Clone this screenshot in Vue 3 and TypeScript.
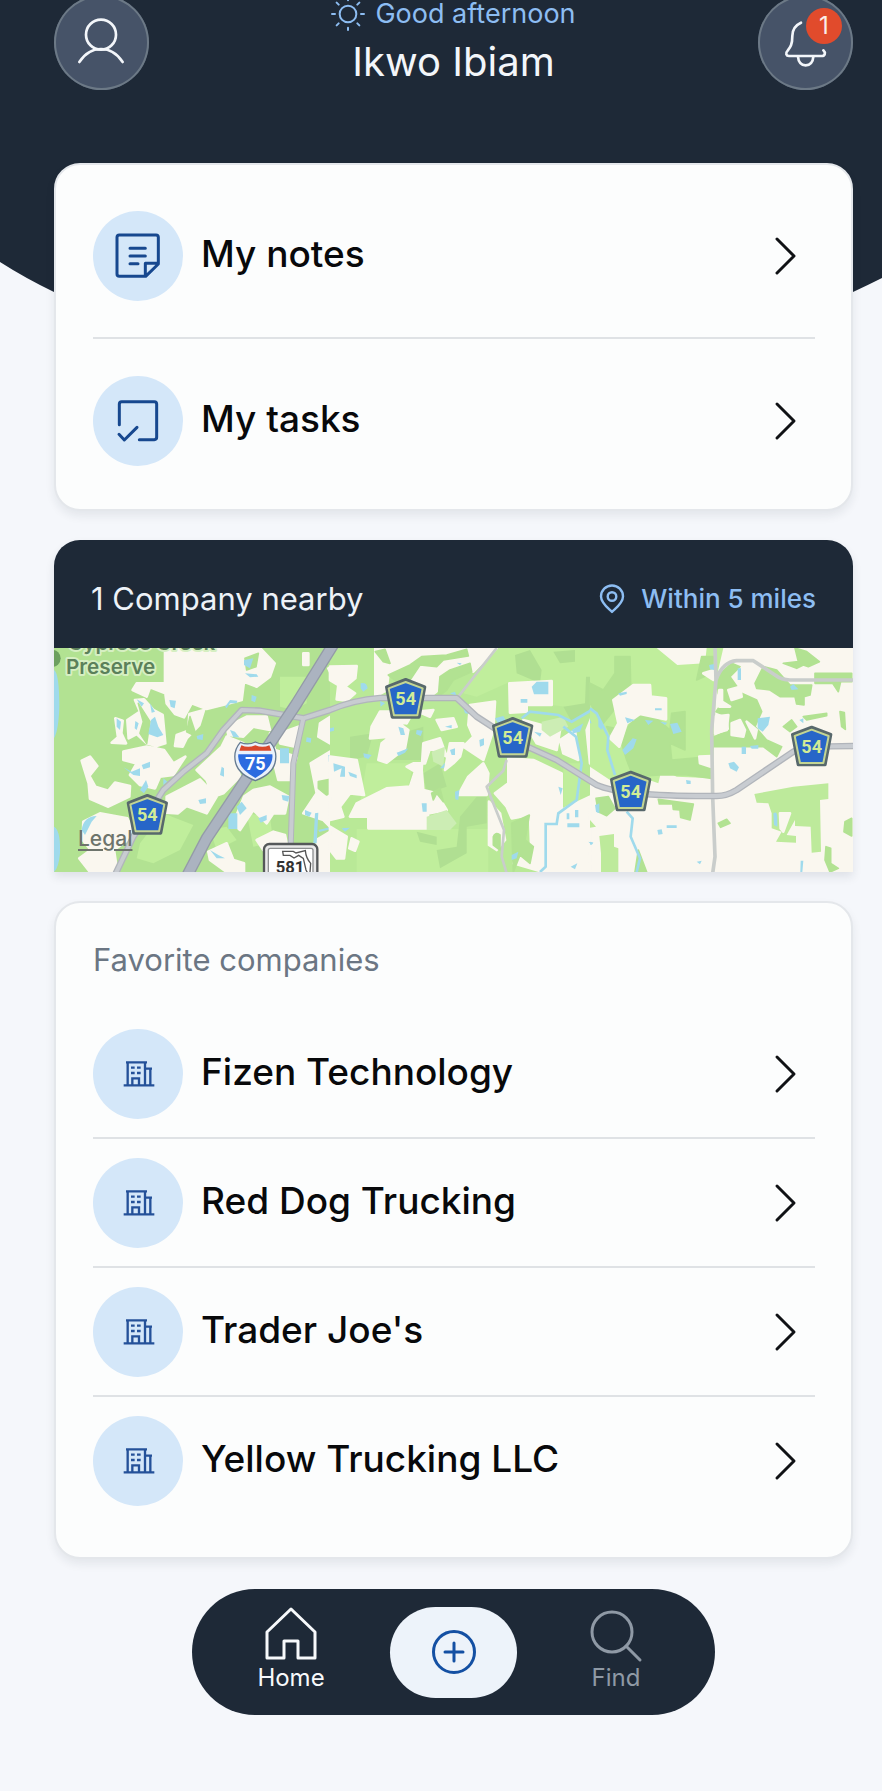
<script setup lang="ts">
interface Shield { id: string; x: number; y: number }
interface Company { id: number; name: string }

const greeting = 'Good afternoon'
const userName = 'Ikwo Ibiam'
const unread = 1

const companies: Company[] = [
  { id: 1, name: 'Fizen Technology' },
  { id: 2, name: 'Red Dog Trucking' },
  { id: 3, name: "Trader Joe's" },
  { id: 4, name: 'Yellow Trucking LLC' },
]

const shields: Shield[] = [
  { id: 'a', x: 322, y: 855 },
  { id: 'b', x: 1097, y: 507 },
  { id: 'c', x: 1418, y: 624 },
  { id: 'd', x: 1772, y: 785 },
  { id: 'e', x: 2315, y: 650 },
]
</script>

<template>
  <div class="page">
    <svg class="backdrop" viewBox="0 0 882 420" preserveAspectRatio="none" aria-hidden="true">
      <path d="M0 0H882V278Q868 285 853 292Q660 385 453 385Q246 385 54 292Q25 278 0 262Z" fill="#1e2937" />
    </svg>

    <header class="top">
      <button class="round" type="button" aria-label="Profile">
        <svg viewBox="163 -15 285 285" fill="none" stroke="#f3f6fa" stroke-width="8" stroke-linecap="round">
          <circle cx="304" cy="104" r="45" />
          <path d="M239 186C256 160 280 147 304 147S352 160 369 186" />
        </svg>
      </button>
      <div class="hello">
        <p class="greeting">
          <svg viewBox="994 -8 102 102" fill="none" stroke="#8dbdf2" stroke-width="6" stroke-linecap="round" aria-hidden="true">
            <circle cx="1045" cy="43" r="25" />
            <path d="M1045 -5V2M1045 84V91M997 43H1006M1084 43H1093M1011 9L1017 15M1073 71L1079 77M1079 9L1073 15M1017 71L1011 77" />
          </svg>
          <span>{{ greeting }}</span>
        </p>
        <h1 class="name">{{ userName }}</h1>
      </div>
      <button class="round" type="button" aria-label="Notifications">
        <svg viewBox="951 -15 285 285" fill="none" stroke="#f3f6fa" stroke-width="8" stroke-linecap="round" stroke-linejoin="round">
          <path d="M1080 68C1062 76 1054 90 1054 108C1054 134 1048 142 1040 152C1032 160 1036 168 1044 168H1142C1152 168 1155 158 1147 151" />
          <path d="M1071 170C1072 186 1081 196 1094 196S1116 186 1117 170" />
        </svg>
        <span class="badge">{{ unread }}</span>
      </button>
    </header>

    <main class="stack">
      <nav class="card shortcuts" aria-label="Shortcuts">
        <a class="row tall" href="#notes">
          <span class="disc">
            <svg viewBox="279 632 270 270" fill="none" stroke="#17488f" stroke-width="9" stroke-linecap="round" stroke-linejoin="round" aria-hidden="true">
              <path d="M358 704H468Q475 704 475 711V791L437 828H358Q351 828 351 821V711Q351 704 358 704ZM475 789H436V828M390 744H436M390 767H436M390 790H414" />
            </svg>
          </span>
          <span class="label">My notes</span>
          <svg class="chevron" viewBox="0 0 24 40" aria-hidden="true"><path d="M3 3L20 20L3 37" /></svg>
        </a>
        <a class="row tall" href="#tasks">
          <span class="disc">
            <svg viewBox="158 136 270 270" fill="none" stroke="#17488f" stroke-width="9" stroke-linecap="round" stroke-linejoin="round" aria-hidden="true">
              <path d="M237 282V220Q237 213 244 213H342Q349 213 349 220V320Q349 327 342 327H297M236 311L252 328L290 290" />
            </svg>
          </span>
          <span class="label">My tasks</span>
          <svg class="chevron" viewBox="0 0 24 40" aria-hidden="true"><path d="M3 3L20 20L3 37" /></svg>
        </a>
      </nav>

      <section class="nearby">
        <div class="nearby-head">
          <h2 class="nearby-title">1 Company nearby</h2>
          <button class="range" type="button">
            <svg viewBox="0 0 26 30" fill="none" stroke="#8dbdf2" stroke-width="2.4" aria-hidden="true">
              <path d="M13 28C9 24 2 19 2 12.500A11 11 0 0 1 24 12.500C24 19 17 24 13 28Z" stroke-linejoin="round" />
              <circle cx="13" cy="12.500" r="4.300" />
            </svg>
            <span>Within 5 miles</span>
          </button>
        </div>
        <div class="map">
          <svg class="map-art" viewBox="42 354 2397 672" preserveAspectRatio="xMidYMid slice" role="img" aria-label="Map of nearby companies">
            <rect x="42" y="354" width="2397" height="672" fill="#faf7ef" />
            <!-- west -->
            <path fill="#b2e292" d="M42 354H912V1026H42Z" />
            <path fill="#c0ee9c" d="M720 440H800V520L760 540L720 530ZM300 940L370 850L400 862L460 885L420 960L340 1000L290 985ZM570 430L610 440L600 480L565 470ZM620 850L690 860L700 940L640 950ZM510 900L560 890L590 930L530 960Z" />
            <path class="land" d="M375 354H660L704 400L690 440L650 470L612 455L605 510L560 522L500 537L455 520L432 562L405 552L380 520L376 490L330 472L320 500L278 480L290 460H375ZM262 570L300 545L285 510L312 508L340 540L368 555L376 640L350 648L320 640L290 612L266 625ZM448 552L492 540L478 585L440 625L428 650L405 648L410 615L445 602ZM226 565L248 572L244 610L258 640L215 638L234 622ZM250 665L320 650L372 660L400 700L436 680L400 735L360 740L345 775L300 765L270 735L290 700L250 690ZM125 692L150 680L172 708L148 738L166 770L205 782L225 758L270 768L268 800L205 830L150 806L146 760ZM130 875L180 850L262 865L285 915L222 960L232 1026H150L118 985L152 960L128 930ZM470 720L545 650L560 620L610 640L590 700L600 740L550 790L520 800L500 750ZM380 800L480 748L530 800L500 850L440 828L414 850L380 848ZM720 610L775 590L765 650L720 640ZM840 580L880 555L912 580V640L870 640L835 620ZM690 610L705 660L770 680L750 750L715 750L700 690ZM560 590L620 560L680 560L690 600L640 590L610 620L565 615ZM640 780L690 770L745 800L735 850L700 850L680 880L640 840L600 900L580 880L612 800ZM812 700L870 665L912 690V1026H836L830 930L880 900L850 870L790 850L830 790ZM505 965L560 940L580 990L612 1000V1026H560L510 990ZM650 930L700 905L735 915L740 940L670 960ZM865 415L912 405V450L880 445ZM790 370H805V405H790Z" />
            <path class="wood" d="M615 385L655 370L648 410L620 420ZM295 520L330 575L320 640L300 610L310 575ZM835 755L885 745L890 775L860 795L835 775ZM880 850L912 830V880L885 875ZM450 560L470 620L440 605Z" />
            <path fill="#9fdaec" d="M612 390L640 385L630 415L612 405ZM615 430L650 433L655 440L630 442ZM555 530L570 510L592 512L590 520L570 520L560 535ZM388 510L408 512L404 535L392 530ZM330 520L345 545L335 548ZM230 565L243 575L240 600L230 590ZM290 508L312 520L305 530ZM286 573L296 580L290 600L284 595ZM333 570L345 560L355 590L370 615L352 622L325 612ZM470 618L490 612L488 630L472 628ZM570 600L585 605L598 622L580 622ZM720 655H747V700H720ZM250 712L275 725L300 715V738L280 735ZM305 705L330 695V712L310 718ZM300 780L318 750L325 770L312 790ZM545 710L552 715V740L540 735ZM475 810L498 805V820L480 822ZM565 850H592V897H565ZM590 830L605 815L620 835L600 855ZM725 795L748 798L745 815L728 810ZM125 900Q130 860 170 858L155 875L135 915ZM870 590L885 592V605L870 602ZM865 675L885 678L880 695L866 695ZM880 715L905 720L900 742L882 732ZM795 840L815 848L808 860L795 855ZM825 850L835 848L830 940H820ZM835 900L885 888V894L838 906ZM510 960L535 975L555 985L530 985ZM635 495L650 500L645 517L634 512ZM800 622L814 625L812 638L798 635ZM42 420Q58 430 58 530Q56 600 42 625ZM42 890Q62 900 60 970Q56 1015 42 1026ZM370 745L382 755L370 765ZM655 865L680 855V870L662 878Z" />

            <!-- centre -->
            <g transform="translate(870 0)">
              <path fill="#b9e997" d="M0 354H780V1026H0Z" />
              <path fill="#c0ee9c" d="M80 897H475V1026H80ZM500 354H780V540L665 525V455H540L440 500L400 490L430 440ZM110 700L250 700L235 770L150 780L90 820ZM700 700L750 700V820L700 840Z" />
              <path fill="#b0df92" d="M555 375L600 360L635 420L630 460L560 430ZM670 365L735 360V395L690 400ZM768 440H780V540L725 575L700 530L765 520ZM260 905L320 920V945L270 935ZM320 960L380 950L390 860L440 800H470V880L410 890V970L330 1015ZM60 620L130 610L110 680L60 690ZM180 620L280 590V690L190 690ZM280 730L330 700L350 770L290 790Z" />
              <path class="land" d="M136 354H500L430 425L400 410L350 425L325 480L300 500H230L220 440L175 435L170 480L136 500ZM0 410L80 408L76 445L45 470L75 490L50 512L20 508L25 465L0 450ZM420 525L495 515L490 600L460 690L400 650L430 620L415 585ZM125 590L150 545L250 545L230 580L200 575L235 600L225 655L170 698L145 690L155 640L180 620L120 625ZM265 545L310 540L300 560ZM320 570L370 565L380 590L335 600ZM280 640L330 625L350 680L300 655L285 700L250 700L230 710L255 725L240 770L170 775L80 820L60 860H115V895H290L295 850L350 840L320 790L280 780L275 720ZM360 640L400 640L390 680L370 700L345 720ZM0 680L80 690L102 795L60 790L30 830L40 860L0 870ZM0 890L50 920L42 985L20 985L0 960ZM65 925L85 935L75 962L58 955ZM385 795L415 740L460 700L475 730L470 795ZM538 460L665 453V525H590V545L540 548ZM580 570L690 600L680 660L620 640ZM690 630L735 600L745 690L700 670ZM535 685L610 690L695 730V840L780 800V1026H640L550 1000L560 970L605 1000L600 855L545 865L530 830L495 790L535 760ZM477 815L510 850L525 930L500 960L477 945ZM770 600L790 550L830 590L815 700L780 700Z" />
              <path class="wood" d="M136 365L165 358L180 400L160 395ZM175 435L240 405L275 380L350 375L410 358L415 378L340 390L320 410L270 405L240 450L200 455ZM325 500L330 440L360 420L420 400L425 425L370 450L350 480ZM490 920Q495 905 510 915V960L490 945ZM550 1026L545 880L598 855L585 930L610 950L600 1000L570 975ZM305 790L330 775L340 815L320 790L310 810Z" />
              <path fill="#ccedb4" d="M635 575L700 560L715 590L660 620L635 600ZM290 860L350 840L380 880L360 900H290ZM305 665L345 650L340 710L310 695Z" />
              <path fill="#9fdaec" d="M605 470L620 455H655V493H612ZM572 507H592V518H572ZM92 460Q110 455 113 475L100 485L92 475ZM150 512L165 520L152 530ZM380 398L395 400L390 405ZM260 600L278 602L272 618L258 612ZM205 590L220 595L225 615H212ZM360 490L375 485L380 498ZM345 590L365 585V595ZM100 670L125 675L115 687L102 682ZM200 668L235 655L225 668L205 678ZM330 715L345 698L342 715ZM360 660L375 655V675H365ZM375 785L388 780L385 810L376 808ZM275 820H290V845H278ZM10 700L45 710V740H30L35 715L12 725ZM55 725L80 735V745L60 738ZM448 630L462 625V645L450 650ZM400 535L425 538L420 552L405 550ZM495 565L520 558L530 575L510 590ZM612 605L635 610L630 620ZM685 770L698 775L692 795ZM710 850H718V868H710ZM735 840H745V862H735ZM712 880H748V892H712ZM775 935L790 938L785 945ZM722 1010L742 1000L735 1018ZM545 975L565 965L560 985L545 990ZM795 825L808 820V850L798 845ZM725 600L760 580L750 605L730 610ZM0 595L12 592V602L0 605ZM35 895L60 893L45 905Z" />
              <path fill="none" stroke="#9fdaec" stroke-width="8" d="M575 565L600 545L685 555L725 575L785 540L830 585L838 640M700 590L738 620L755 700L740 810L685 850L680 882H647V1010L630 1026" />
            </g>

            <!-- east -->
            <g transform="translate(1650 0)">
              <path fill="#c0ee9c" d="M0 354H200L262 405L345 400L350 354H400L380 440L368 745L260 740L215 718L205 760L150 740L60 750L0 710Z" />
              <path class="wood" d="M0 460L40 480L75 430V380H120L122 470L72 505V540L40 580L0 520ZM95 640L115 590L150 550L190 555L240 600L245 550L285 545V660L240 640L245 690L362 680L365 745L290 735L210 735L130 740L110 690ZM335 380H370L365 430L320 450ZM50 590L75 595L65 620Z" />
              <path class="land" d="M70 510L130 465L180 465L182 500L228 505V568L150 552L110 580L88 650L60 625L85 580ZM340 430L372 420L370 450ZM328 680L365 678L362 710L330 700Z" />
              <path class="wood" d="M380 440L425 400L450 410L420 440L455 490L500 510L515 545L495 590L530 630L575 650L560 680L520 650L370 650L372 620L420 600L415 560L378 545L395 520L385 490ZM495 460L520 410L560 420L600 465H665L660 495L642 500V525L620 522L615 500L570 500L540 480L500 475ZM580 400L625 395L615 354L650 365L688 395L655 410L640 405L620 415ZM675 430H785V455H752L745 485L728 460H675ZM580 590L605 570L620 590L600 605ZM640 560L710 550V557L650 570ZM750 545L763 548L766 598L755 590ZM18 805L55 800L75 835L50 857L25 845ZM205 808L310 822L300 870L272 862L270 840L250 838L248 822L208 822ZM385 880L410 868L420 880L392 892ZM765 875L785 865V918L762 905ZM708 950L722 955V1000L745 1015L720 1026L705 990ZM145 960L170 1026H135Z" />
              <path fill="#bdea9b" d="M493 792L610 770L715 760V807L690 810L693 965L665 968L662 890L615 888V870L590 915L618 918V938L558 935L575 905L545 895V850L535 820L500 818ZM28 918L72 912V950L85 955V1026H33V970ZM0 870L18 890L0 893Z" />
              <path class="land" d="M415 480L450 470L455 500L425 510ZM388 480H396V515L420 530H388ZM375 560L415 555L410 600L375 610ZM425 580L450 570L465 600L460 620L425 615ZM470 575L500 600L495 625ZM570 850L600 850L580 905L572 895Z" />
              <path fill="#9fdaec" d="M503 565L540 560L535 585L518 605L503 595ZM240 582L262 578L275 605L250 612ZM105 562L135 570L112 580ZM165 570L190 572L175 585ZM97 660L128 625L140 628L130 655L105 675ZM195 535H215V541H195ZM415 700L432 695L447 712L440 725L420 715ZM455 650H468V672H455ZM480 648L505 645V656H485ZM443 415H453V450H443ZM357 405L372 402V420L360 418ZM600 470L610 462L625 478L605 480ZM628 570L640 565V580ZM550 850Q562 840 562 865V890L552 885ZM230 886H260V894H230ZM202 900L215 898L218 912L205 914ZM288 750L302 752V762H290ZM320 995L335 992L330 1003ZM632 992H640L637 1026H631ZM18 825L28 820V850L18 845ZM0 935L10 938L0 945ZM25 565L40 585L35 600L25 590ZM0 568L5 580H0ZM85 490L110 485V492L90 497ZM210 575L232 578L225 585Z" />
              <path fill="none" stroke="#9fdaec" stroke-width="8" d="M0 535L20 550L55 620L52 660L75 735M110 845L128 865L122 920L150 985L140 1026" />
            </g>

            <!-- roads -->
            <g fill="none" stroke-linejoin="round">
              <g stroke="#c9cdcb" stroke-width="8">
                <path d="M1370 354L1255 500M1400 690L1390 722L1340 770L1392 900L1385 980L1400 1030" />
                <path stroke-width="11" d="M2025 350L2028 450L2015 600L2018 800L2025 980L2018 1030M2028 450Q2048 395 2090 392H2140L2205 435Q2225 450 2250 450H2442" />
              </g>
              <g stroke="#b1b5bb" stroke-width="20">
                <path d="M225 1035L280 920L370 780L430 725L500 670L550 600L605 540L660 542L790 565L870 540Q940 510 1020 504H1250L1310 560L1418 630L1550 690L1670 765Q1750 800 2030 798Q2060 798 2090 780L2260 665Q2290 648 2442 648" />
                <path d="M790 565L760 700L752 950" stroke-width="18" />
              </g>
              <g stroke="#c8ccd1" stroke-width="12">
                <path d="M225 1035L280 920L370 780L430 725L500 670L550 600L605 540L660 542L790 565L870 540Q940 510 1020 504H1250L1310 560L1418 630L1550 690L1670 765Q1750 800 2030 798Q2060 798 2090 780L2260 665Q2290 648 2442 648" />
                <path d="M790 565L760 700L752 950" />
              </g>
              <path d="M882 340L770 520L680 655L600 775L500 925L440 1040" stroke="#949ba7" stroke-width="36" />
              <path d="M882 340L770 520L680 655L600 775L500 925L440 1040" stroke="#abb3c0" stroke-width="28" />
            </g>

            <!-- park label -->
            <circle cx="36" cy="385" r="26" fill="#6da05f" />
            <g class="park" font-size="62">
              <text x="84" y="361">Cypress Creek</text>
              <text x="78" y="432">Preserve</text>
            </g>

            <!-- interstate 75 -->
            <g transform="translate(646 693)">
              <path d="M-45 -56Q-22 -46 0 -57Q22 -46 45 -56Q68 -30 59 6Q50 40 0 59Q-50 40 -59 6Q-68 -30 -45 -56Z" fill="#eaf1fb" stroke="#667b91" stroke-width="4" />
              <path d="M-51 -20H51Q56 20 0 51Q-56 20 -51 -20Z" fill="#2c6be0" />
              <path d="M-42 -47Q-22 -38 0 -47Q22 -38 42 -47L48 -31H-48Z" fill="#d9482b" />
              <text class="digits" y="26" font-size="54" fill="#fff">75</text>
            </g>

            <!-- county road 54 -->
            <g v-for="s in shields" :key="s.id" :transform="`translate(${s.x} ${s.y})`">
              <path d="M-57 -36L0 -58L57 -36L40 54H-40Z" fill="#57686c" stroke="#57686c" stroke-width="10" stroke-linejoin="round" />
              <path d="M-51 -32L0 -51L51 -32L35 49H-35Z" fill="#2766c8" stroke="#c3d593" stroke-width="6" stroke-linejoin="round" />
              <text class="digits" y="19" font-size="54" fill="#d2ec96">54</text>
            </g>

            <!-- state road 581 -->
            <rect x="672" y="942" width="160" height="150" rx="16" fill="#e9e9e9" stroke="#55585a" stroke-width="7" />
            <rect x="685" y="955" width="134" height="130" rx="6" fill="#fff" stroke="#8d8f91" stroke-width="4" />
            <path d="M728 964H760L768 969L796 962Q798 985 812 1000L809 1040L798 1020L790 985L776 976L762 984L750 976H730Z" fill="#fff" stroke="#555" stroke-width="4" />
            <text class="digits" x="750" y="1028" font-size="50" fill="#333">581</text>
          </svg>
          <a class="legal" href="#legal">Legal</a>
        </div>
      </section>

      <section class="card favorites">
        <h2 class="favorites-title">Favorite companies</h2>
        <ul class="list">
          <li v-for="c in companies" :key="c.id">
            <a class="row" :href="`#company-${c.id}`">
              <span class="disc">
                <svg viewBox="158 415 270 270" fill="none" stroke="#245199" stroke-width="7" aria-hidden="true">
                  <path d="M250 584H342M257 515H320M262 517V584M314 517V584M276 584V563H296V584M314 534H335M330 536V584" />
                  <path d="M272 531H283M290 531H301M272 547H283M290 547H301" />
                </svg>
              </span>
              <span class="label">{{ c.name }}</span>
              <svg class="chevron" viewBox="0 0 24 40" aria-hidden="true"><path d="M3 3L20 20L3 37" /></svg>
            </a>
          </li>
        </ul>
      </section>
    </main>

    <nav class="dock" aria-label="Main">
      <a class="tab active" href="#home" aria-current="page">
        <svg viewBox="0 0 54 54" aria-hidden="true"><path d="M27 3L51 26V52H34V35H20V52H3V26Z" /></svg>
        <span>Home</span>
      </a>
      <button class="add" type="button" aria-label="Add">
        <svg viewBox="0 0 46 46" aria-hidden="true"><circle cx="23" cy="23" r="20.500" /><path d="M23 14V32M14 23H32" /></svg>
      </button>
      <a class="tab" href="#find">
        <svg viewBox="0 0 54 54" aria-hidden="true"><circle cx="23" cy="26" r="20" /><path d="M37 40L51 54" /></svg>
        <span>Find</span>
      </a>
    </nav>
  </div>
</template>

<style>
body {
  background: #f5f7fb;
}
</style>

<style scoped>
.page {
  position: relative;
  box-sizing: border-box;
  padding: 0 29px 76px 54px;
  background: #f5f7fb;
  color: #08090b;
  font-family: Inter, "Liberation Sans", sans-serif;
  overflow: hidden;
}
.page *,
.page *::before {
  box-sizing: border-box;
}
a {
  color: inherit;
  text-decoration: none;
}
button {
  padding: 0;
  border: 0;
  background: none;
  font: inherit;
  cursor: pointer;
}
svg {
  display: block;
}
.backdrop {
  position: absolute;
  top: 0;
  left: 0;
  width: 100%;
  height: 420px;
}
.top {
  position: relative;
  display: flex;
  align-items: flex-end;
  justify-content: space-between;
  height: 90px;
}
.round {
  position: relative;
  flex: none;
  width: 95px;
  height: 95px;
  border-radius: 50%;
  background: #465368;
  box-shadow: inset 0 0 0 2px #6c7986;
}
.round svg {
  width: 95px;
  height: 95px;
}
.badge {
  position: absolute;
  top: 13px;
  right: 11px;
  width: 36px;
  height: 36px;
  border-radius: 50%;
  background: #e14b2c;
  color: #fbeee9;
  font-size: 24px;
  line-height: 36px;
  text-align: center;
}
.hello {
  padding-bottom: 6px;
  text-align: center;
}
.greeting {
  display: flex;
  align-items: center;
  justify-content: center;
  gap: 10px;
  margin: 0 0 12px;
  color: #8dbdf2;
  font-size: 27px;
  line-height: 28px;
}
.greeting svg {
  width: 34px;
  height: 34px;
  margin: -3px 0;
}
.name {
  margin: 0;
  color: #f3f6fa;
  font-size: 40px;
  font-weight: 400;
  line-height: 44px;
}
.stack {
  position: relative;
  display: flex;
  flex-direction: column;
  gap: 29px;
  margin-top: 73px;
}
.card {
  border: 2px solid #e4e7eb;
  border-radius: 26px;
  background: #fcfdfd;
  box-shadow: 0 5px 10px rgba(30, 41, 55, 0.08);
}
.shortcuts {
  padding: 9px 36px 5px 37px;
}
.row {
  display: flex;
  align-items: center;
  gap: 18px;
  height: 129px;
  padding-right: 17px;
  border-bottom: 2px solid #dfe2e5;
}
.row.tall {
  height: 165px;
}
.shortcuts .row:last-child,
li:last-child .row {
  border-bottom-color: transparent;
}
.disc {
  flex: none;
  width: 90px;
  height: 90px;
  border-radius: 50%;
  background: #d4e7f9;
}
.label {
  flex: 1;
  padding-bottom: 4px;
  font-size: 37px;
  font-weight: 500;
  line-height: 44px;
}
.chevron {
  flex: none;
  width: 24px;
  height: 40px;
  fill: none;
  stroke: #101215;
  stroke-width: 3px;
  stroke-linecap: round;
  stroke-linejoin: round;
}
.nearby {
  border-radius: 26px 26px 0 0;
  background: #1e2937;
  box-shadow: 0 5px 10px rgba(30, 41, 55, 0.1);
  overflow: hidden;
}
.nearby-head {
  display: flex;
  align-items: center;
  justify-content: space-between;
  height: 108px;
  padding: 10px 37px 0;
}
.nearby-title {
  margin: 0;
  color: #edf2f8;
  font-size: 31px;
  font-weight: 400;
  line-height: 40px;
}
.range {
  display: flex;
  align-items: center;
  gap: 16px;
  color: #8dbdf2;
  font-size: 26px;
  font-weight: 500;
  line-height: 32px;
}
.range svg {
  width: 26px;
  height: 30px;
}
.map {
  position: relative;
}
.map-art {
  width: 100%;
  height: 224px;
}
.land {
  fill: #faf7ef;
  stroke: #faf7ef;
  stroke-width: 8px;
  stroke-linejoin: round;
}
.wood {
  fill: #b2e292;
  stroke: #b2e292;
  stroke-width: 5px;
  stroke-linejoin: round;
}
.park {
  fill: #5b805a;
  stroke: #d6efc2;
  stroke-width: 12px;
  stroke-linejoin: round;
  paint-order: stroke;
  font-weight: 600;
}
.digits {
  font-family: Roboto, "Liberation Sans", sans-serif;
  font-weight: 700;
  text-anchor: middle;
}
.legal {
  position: absolute;
  bottom: 20px;
  left: 24px;
  color: #6d746c;
  font-size: 21px;
  font-weight: 500;
  line-height: 26px;
  text-decoration: underline;
  text-underline-offset: 3px;
}
.favorites {
  padding: 37px 36px 31px 37px;
}
.favorites-title {
  margin: 0 0 30px;
  color: #6b7683;
  font-size: 31px;
  font-weight: 400;
  line-height: 40px;
}
.list {
  margin: 0;
  padding: 0;
  list-style: none;
}
.dock {
  position: relative;
  display: grid;
  grid-template-columns: 1fr 127px 1fr;
  width: 523px;
  max-width: 100%;
  height: 126px;
  margin: 30px auto 0;
  border-radius: 63px;
  background: #1e2937;
}
.tab {
  display: flex;
  flex-direction: column;
  align-items: center;
  gap: 4px;
  padding-top: 17px;
  color: #8f99a5;
  font-size: 24px;
  line-height: 28px;
}
.tab.active {
  color: #f7f9fb;
}
.tab svg {
  width: 54px;
  height: 54px;
  overflow: visible;
  fill: none;
  stroke: currentColor;
  stroke-width: 3px;
  stroke-linecap: round;
  stroke-linejoin: round;
}
.add {
  display: grid;
  place-items: center;
  align-self: center;
  height: 91px;
  border-radius: 46px;
  background: #edf3fa;
}
.add svg {
  width: 46px;
  height: 46px;
  fill: none;
  stroke: #1450a3;
  stroke-width: 3px;
  stroke-linecap: round;
}
</style>
